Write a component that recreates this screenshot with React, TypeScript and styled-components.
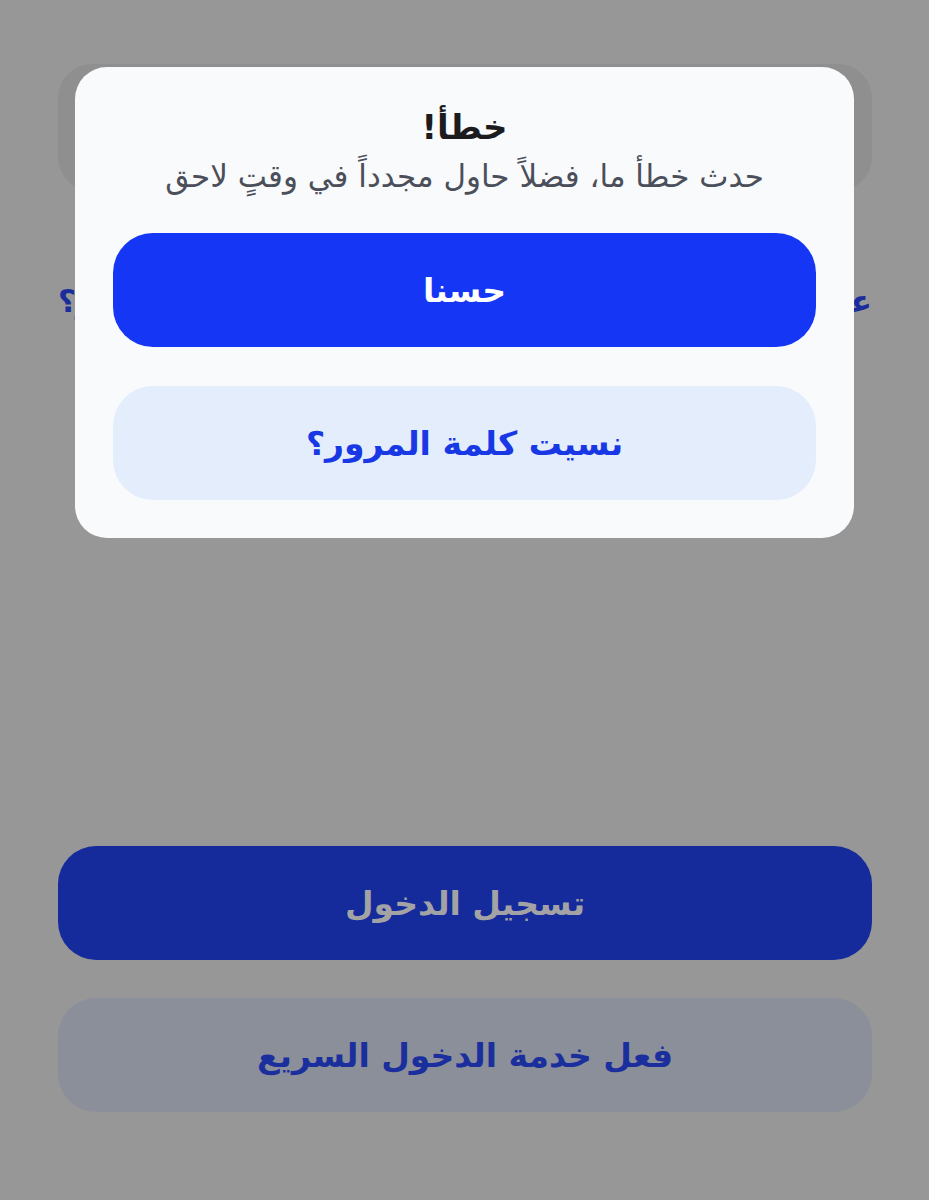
import React from "react";
import styled, { createGlobalStyle } from "styled-components";

const Global = createGlobalStyle`
  html, body { margin: 0; padding: 0; background: #979797; }
  body { font-family: "DejaVu Sans", "Noto Sans", sans-serif; direction: rtl; }
  * { box-sizing: border-box; }
`;

const Page = styled.div`
  position: relative;
  width: 929px;
  min-height: 1200px;
  background: #979797;
  padding: 64px 57px 0 58px;
  display: flex;
  flex-direction: column;
`;

const GhostCard = styled.div`
  height: 127px;
  border-radius: 34px;
  background: #8f8f90;
`;

const LinkRow = styled.div`
  margin-top: 92px;
  display: flex;
  justify-content: space-between;
  align-items: center;
  height: 36px;
`;

const GhostLink = styled.span`
  font-size: 31px;
  font-weight: 700;
  color: #1b2d9c;
  white-space: nowrap;
`;

const Bottom = styled.div`
  margin-top: 527px;
  display: flex;
  flex-direction: column;
  gap: 38px;
`;

const PageButton = styled.div<{ $variant: "primary" | "secondary" }>`
  height: 114px;
  border-radius: 38px;
  display: flex;
  align-items: center;
  justify-content: center;
  font-size: 33px;
  font-weight: 700;
  background: ${(p) => (p.$variant === "primary" ? "#152a9b" : "#8b8f99")};
  color: ${(p) => (p.$variant === "primary" ? "#a3a3a6" : "#1a2e9d")};
`;

const Modal = styled.div`
  position: absolute;
  top: 67px;
  left: 75px;
  width: 779px;
  background: #f9fafc;
  border-radius: 32px;
  padding: 40px 38px 38px;
  display: flex;
  flex-direction: column;
  align-items: stretch;
`;

const Title = styled.h2`
  margin: 0;
  text-align: center;
  font-size: 34px;
  line-height: 40px;
  font-weight: 700;
  color: #1c1c1e;
`;

const Message = styled.p`
  margin: 9px 0 0;
  text-align: center;
  font-size: 31px;
  line-height: 40px;
  color: #4b4f5a;
`;

const Actions = styled.div`
  margin-top: 37px;
  display: flex;
  flex-direction: column;
  gap: 39px;
`;

const ModalButton = styled.button<{ $variant: "primary" | "secondary" }>`
  height: 114px;
  border: none;
  border-radius: 40px;
  font-family: inherit;
  font-size: 33px;
  font-weight: 700;
  cursor: pointer;
  background: ${(p) => (p.$variant === "primary" ? "#1536f5" : "#e3edfc")};
  color: ${(p) => (p.$variant === "primary" ? "#ffffff" : "#1838e6")};
`;

export default function App() {
  return (
    <>
      <Global />
      <Page>
        <GhostCard />
        <LinkRow>
          <GhostLink>عرض التفاصيل</GhostLink>
          <GhostLink>نسيت كلمة المرور؟</GhostLink>
        </LinkRow>
        <Bottom>
          <PageButton $variant="primary">تسجيل الدخول</PageButton>
          <PageButton $variant="secondary">فعل خدمة الدخول السريع</PageButton>
        </Bottom>
        <Modal role="dialog">
          <Title>خطأ!</Title>
          <Message>حدث خطأ ما، فضلاً حاول مجدداً في وقتٍ لاحق</Message>
          <Actions>
            <ModalButton $variant="primary">حسنا</ModalButton>
            <ModalButton $variant="secondary">نسيت كلمة المرور؟</ModalButton>
          </Actions>
        </Modal>
      </Page>
    </>
  );
}
